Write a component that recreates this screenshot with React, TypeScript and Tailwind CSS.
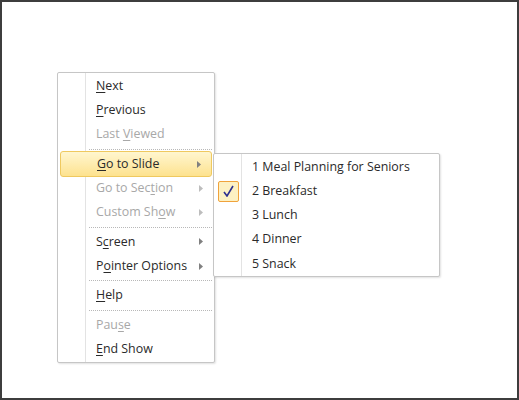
import React from 'react'

type Item =
  | { kind: 'sep' }
  | { kind: 'item'; label: string; key: number; disabled?: boolean; sub?: boolean; active?: boolean }

const items: Item[] = [
  { kind: 'item', label: 'Next', key: 0 },
  { kind: 'item', label: 'Previous', key: 0 },
  { kind: 'item', label: 'Last Viewed', key: 5, disabled: true },
  { kind: 'sep' },
  { kind: 'item', label: 'Go to Slide', key: 0, sub: true, active: true },
  { kind: 'item', label: 'Go to Section', key: 9, sub: true, disabled: true },
  { kind: 'item', label: 'Custom Show', key: 9, sub: true, disabled: true },
  { kind: 'sep' },
  { kind: 'item', label: 'Screen', key: 1, sub: true },
  { kind: 'item', label: 'Pointer Options', key: 1, sub: true },
  { kind: 'sep' },
  { kind: 'item', label: 'Help', key: 0 },
  { kind: 'sep' },
  { kind: 'item', label: 'Pause', key: 3, disabled: true },
  { kind: 'item', label: 'End Show', key: 0 },
]

const slides = ['1 Meal Planning for Seniors', '2 Breakfast', '3 Lunch', '4 Dinner', '5 Snack']

// label with the access key underlined
function Label({ text, k }: { text: string; k: number }) {
  return (
    <span>
      {text.slice(0, k)}
      <span className="underline underline-offset-2">{text[k]}</span>
      {text.slice(k + 1)}
    </span>
  )
}

function Arrow({ disabled }: { disabled?: boolean }) {
  return (
    <svg width="4" height="7" viewBox="0 0 4 7" className="mr-[10px]">
      <path d="M0 0 L4 3.5 L0 7 Z" fill={disabled ? '#bdbdbd' : '#808080'} />
    </svg>
  )
}

export default function App() {
  return (
    <div
      className="w-[519px] h-[400px] border-2 border-[#3d3d3d] bg-white text-[12.4px]"
      style={{ fontFamily: '"Open Sans", "Noto Sans", sans-serif' }}
    >
      <div className="flex items-start pl-[55px] pt-[70px]">
        {/* Menu principale */}
        <div className="relative w-[158px] h-[291px] rounded-[2px] border border-[#c6c6c6] bg-white shadow-[1px_1px_2px_rgba(0,0,0,0.12)] px-[1px] pt-[1px] flex flex-col">
          <div className="absolute left-[27px] top-0 bottom-0 w-px bg-[#e3e3e3]" />
          {items.map((it, i) =>
            it.kind === 'sep' ? (
              <div key={i} className="h-[5px] flex items-center pl-[30px] pr-[1px]">
                <div className="w-full border-t border-dotted border-[#b8b8b8]" />
              </div>
            ) : (
              <div
                key={i}
                className={
                  'relative flex items-center justify-between ' +
                  (it.active
                    ? 'mx-[1px] rounded-[3px] border border-[#efc95f] bg-gradient-to-b from-[#fff6cf] to-[#fde28e] pl-[36px] -my-[1px] h-[26.3px]'
                    : 'pl-[37px] h-[24.3px]') +
                  (it.disabled ? ' text-[#a8a8a8]' : ' text-[#2a2a2a]')
                }
              >
                <Label text={it.label} k={it.key} />
                {it.sub && <Arrow disabled={it.disabled} />}
              </div>
            )
          )}
        </div>

        {/* Sottomenu Go to Slide */}
        <div className="relative -ml-[2px] mt-[81px] w-[227px] h-[124px] rounded-[2px] border border-[#c6c6c6] bg-white shadow-[1px_1px_2px_rgba(0,0,0,0.12)] flex flex-col pt-[1px]">
          <div className="absolute left-[27px] top-0 bottom-0 w-px bg-[#e3e3e3]" />
          {slides.map((s, i) => (
            <div key={s} className="h-[24.3px] flex items-center text-[#2a2a2a]">
              <div className="w-[28px] flex justify-center">
                {i === 1 && (
                  <div className="w-[21px] h-[21px] ml-[4px] mr-[3px] rounded-[2px] border border-[#f0a33c] bg-[#fdf1c3] flex items-center justify-center">
                    <svg width="11" height="12" viewBox="0 0 11 12">
                      <path d="M1 7 L4 11 L10 1" fill="none" stroke="#2d2f8f" strokeWidth="1.6" />
                    </svg>
                  </div>
                )}
              </div>
              <span className="pl-[10px]">{s}</span>
            </div>
          ))}
        </div>
      </div>
    </div>
  )
}
